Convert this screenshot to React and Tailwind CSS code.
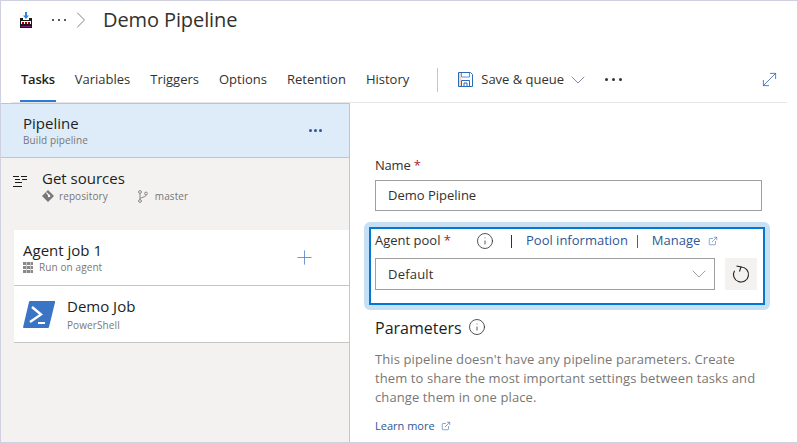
import React from 'react';
import { ChevronDown, ChevronRight, Plus, Info, ExternalLink, MoveDiagonal } from 'lucide-react';

const font = { fontFamily: '"Open Sans", "Noto Sans", sans-serif' };

const BuildIcon = () => (
  <svg width="14" height="16" viewBox="0 0 14 16">
    <path d="M7 0v5" stroke="#2b88d8" strokeWidth="2" />
    <path d="M4 3.5L7 7l3-3.5z" fill="#2b88d8" />
    <path d="M1 6h3v2h6V6h3v10H1z" fill="#1b1a19" />
    <rect x="2" y="9" width="10" height="3" fill="#fff" />
    <rect x="3" y="10" width="2" height="2" fill="#a80000" />
    <rect x="6" y="10" width="2" height="2" fill="#a80000" />
    <rect x="9" y="10" width="2" height="2" fill="#a80000" />
    <rect x="2" y="14" width="10" height="1" fill="#7a1f7a" />
  </svg>
);

const SaveIcon = () => (
  <svg width="15" height="15" viewBox="0 0 15 15" fill="none">
    <path d="M.5.5h12l2 2v12H.5z" stroke="#2b6cb8" />
    <path d="M3.5 1v4h8V1" stroke="#6c8fc0" />
    <path d="M3.5 14V8.5h8V14M6 14v-3h3v3" stroke="#2b6cb8" />
    <rect x="1" y="1" width="2" height="13" fill="#f2c6a0" opacity="0.7" />
  </svg>
);

const RefreshIcon = () => (
  <svg width="20" height="20" viewBox="0 0 20 20" fill="none" stroke="#201f1e" strokeWidth="1.1">
    <path d="M10 3a7.5 7.5 0 1 1-6.5 3.75" />
    <path d="M5.5 2l4.5 1-1.5 4.5" />
  </svg>
);

const SourcesIcon = () => (
  <svg width="15" height="14" viewBox="0 0 15 14" fill="#1b1a19">
    <rect x="0" y="1" width="6" height="1" />
    <rect x="8" y="1" width="6" height="1" />
    <rect x="2" y="4" width="5" height="1" />
    <rect x="9" y="4" width="5" height="1" />
    <rect x="2" y="7" width="7" height="1" />
    <rect x="0" y="11" width="9" height="1" />
  </svg>
);

const GitIcon = () => (
  <svg width="12" height="12" viewBox="0 0 11 11">
    <path d="M5.5 0L11 5.5 5.5 11 0 5.5z" fill="#797775" />
    <circle cx="6.5" cy="5.5" r="1.2" fill="#fff" />
    <path d="M4 2.5l3 3" stroke="#fff" />
  </svg>
);

const BranchIcon = () => (
  <svg width="10" height="13" viewBox="0 0 10 13" fill="none" stroke="#8a8886">
    <circle cx="2" cy="2" r="1.4" />
    <circle cx="2" cy="11" r="1.4" />
    <circle cx="8" cy="3.5" r="1.4" />
    <path d="M2 3.5v6M8 5c0 2.5-6 2-6 4" />
  </svg>
);

const AgentIcon = () => (
  <svg width="10" height="11" viewBox="0 0 10 11" fill="#8a8886">
    <rect x="0" y="0" width="10" height="3" />
    <rect x="0" y="4" width="10" height="3" />
    <rect x="0" y="8" width="10" height="3" />
    <rect x="3" y="0" width="1" height="11" fill="#c8c6c4" />
    <rect x="7" y="0" width="1" height="11" fill="#c8c6c4" />
  </svg>
);

const PowerShellIcon = () => (
  <svg width="32" height="27" viewBox="0 0 32 27">
    <path d="M7 0h24.5c.5 0 .7.4.6 1L26 26c-.1.6-.5 1-1 1H.8c-.6 0-.9-.4-.7-1L6 1c.1-.6.5-1 1-1z" fill="#3a74c5" />
    <path d="M9 6l9 7.5L7 21" fill="none" stroke="#fff" strokeWidth="2.4" />
    <path d="M15 22h7" stroke="#fff" strokeWidth="2" />
  </svg>
);

const Tab = ({ label, active }) => (
  <div className={`relative h-full flex items-center ${active ? 'font-semibold text-[#201f1e] tracking-[-0.25px]' : 'text-[#323130]'}`}>
    <span>{label}</span>
    {active && <span className="absolute left-[-1px] right-[-1px] bottom-0 h-[2px] bg-[#2b7cd3]" />}
  </div>
);

export default function App() {
  return (
    <div style={font} className="w-[798px] h-[443px] flex flex-col overflow-hidden bg-white border border-[#cfd0e0] box-border text-[#323130]">
      {/* Breadcrumb */}
      <div className="h-[38px] flex items-center pl-[18px] shrink-0">
        <BuildIcon />
        <span className="ml-[19px] flex gap-[4px]">
          <i className="w-[2px] h-[2px] bg-[#5c5a58]" />
          <i className="w-[2px] h-[2px] bg-[#5c5a58]" />
          <i className="w-[2px] h-[2px] bg-[#5c5a58]" />
        </span>
        <ChevronRight size={28} strokeWidth={0.8} className="ml-[1px] text-[#797775]" />
        <span className="ml-[8px] text-[20px] tracking-[-0.1px] text-[#323130] leading-none">Demo Pipeline</span>
      </div>

      {/* Tabs */}
      <div className="h-[64px] ml-[10px] mr-[10px] shrink-0 border-b border-[#e6e6e6] flex items-stretch pl-[10px] pr-[7px] pt-[18px] text-[13px]">
        <div className="flex items-center gap-[20px]">
          <Tab label="Tasks" active />
          <Tab label="Variables" />
          <Tab label="Triggers" />
          <Tab label="Options" />
          <Tab label="Retention" />
          <Tab label="History" />
        </div>
        <div className="w-px h-[24px] bg-[#c8c6c4] ml-[28px] self-center" />
        <div className="flex items-center ml-[20px]">
          <SaveIcon />
          <span className="ml-[8px]">Save &amp; queue</span>
          <ChevronDown size={24} strokeWidth={0.8} className="ml-[2px] text-[#5c6f8c]" />
          <span className="ml-[15px] flex gap-[4px]">
            <i className="w-[3px] h-[3px] rounded-full bg-[#323130]" />
            <i className="w-[3px] h-[3px] rounded-full bg-[#323130]" />
            <i className="w-[3px] h-[3px] rounded-full bg-[#323130]" />
          </span>
        </div>
        <div className="ml-auto flex items-center">
          <MoveDiagonal size={21} strokeWidth={0.9} className="text-[#2b5fb3]" />
        </div>
      </div>

      <div className="flex-1 flex min-h-0">
        {/* Left panel */}
        <div className="w-[349px] shrink-0 bg-[#f3f2f1] border-r border-[#c8c6c4] flex flex-col">
          <div className="h-[55px] bg-[#deecf9] border border-l-0 border-[#a9c8f2] flex items-center justify-between pl-[22px] pr-[27px] -mr-px relative">
            <div>
              <div className="text-[15px] leading-[19px] text-[#201f1e]">Pipeline</div>
              <div className="text-[10px] leading-[14px] text-[#797775] tracking-[0.1px]">Build pipeline</div>
            </div>
            <span className="flex gap-[2px]">
              <i className="w-[3px] h-[3px] rounded-full bg-[#2b5797]" />
              <i className="w-[3px] h-[3px] rounded-full bg-[#2b5797]" />
              <i className="w-[3px] h-[3px] rounded-full bg-[#2b5797]" />
            </span>
          </div>

          <div className="h-[72px] flex pl-[12px] pt-[11px]">
            <div className="pt-[6px]"><SourcesIcon /></div>
            <div className="ml-[14px]">
              <div className="text-[15px] leading-[19px] text-[#201f1e]">Get sources</div>
              <div className="flex items-center text-[10px] leading-[14px] text-[#797775] mt-[1px] tracking-[0.1px]">
                <GitIcon />
                <span className="ml-[5px]">repository</span>
                <span className="ml-[30px]"><BranchIcon /></span>
                <span className="ml-[7px]">master</span>
              </div>
            </div>
          </div>

          <div className="ml-[13px] bg-white">
            <div className="h-[56px] border-b border-[#c8c6c4] flex items-center justify-between pl-[9px] pr-[33px]">
              <div>
                <div className="text-[15px] leading-[19px] text-[#201f1e]">Agent job 1</div>
                <div className="flex items-center text-[10px] leading-[14px] text-[#797775] tracking-[0.1px]">
                  <AgentIcon />
                  <span className="ml-[6px]">Run on agent</span>
                </div>
              </div>
              <Plus size={23} strokeWidth={0.9} className="text-[#5b87c7]" />
            </div>
            <div className="h-[57px] border-b border-[#c8c6c4] flex items-center pl-[9px]">
              <PowerShellIcon />
              <div className="ml-[12px]">
                <div className="text-[15px] leading-[19px] text-[#201f1e]">Demo Job</div>
                <div className="text-[10px] leading-[14px] text-[#797775] mt-[2px] tracking-[0.1px]">PowerShell</div>
              </div>
            </div>
          </div>
        </div>

        {/* Right panel */}
        <div className="flex-1 flex flex-col pl-[14px] pt-[53px] min-w-0">
          <div className="pl-[11px] pr-[35px]">
            <div className="text-[13px] leading-[18px] tracking-[-0.2px]">
              Name <span className="text-[#a4262c]">*</span>
            </div>
            <div className="mt-[6px] h-[31px] border border-[#a19f9d] flex items-center pl-[12px] pt-[1px] text-[13px]">
              Demo Pipeline
            </div>
          </div>

          <div className="mt-[11px] w-[406px] rounded-[6px] border-[5px] border-[#c7e0f4]">
            <div className="h-[78px] border-2 border-[#0078d4] px-[4px] pt-[2px]">
              <div className="flex items-center h-[20px] text-[13px]">
                <span>Agent pool <span className="text-[#a4262c]">*</span></span>
                <Info size={18} strokeWidth={1} className="ml-[25px] text-[#201f1e]" />
                <span className="ml-[17px] w-px h-[13px] bg-[#323130]" />
                <span className="ml-[14px] text-[#2b5797]">Pool information</span>
                <span className="ml-[9px] w-px h-[13px] bg-[#1f6fb5]" />
                <span className="ml-[14px] text-[#2b5797]">Manage</span>
                <ExternalLink size={10} strokeWidth={1.3} className="ml-[8px] text-[#2b5fb3]" />
              </div>
              <div className="flex mt-[7px] gap-[10px]">
                <div className="w-[340px] h-[32px] border border-[#a19f9d] flex items-center justify-between pl-[12px] pr-[3px] text-[13px] tracking-[0.2px]">
                  <span className="pt-[2px]">Default</span>
                  <ChevronDown size={24} strokeWidth={0.8} className="text-[#8a8886]" />
                </div>
                <div className="w-[32px] h-[32px] bg-[#f3f2f1] flex items-center justify-center">
                  <RefreshIcon />
                </div>
              </div>
            </div>
          </div>

          <div className="pl-[11px] mt-[6px] w-[400px]">
            <div className="flex items-center">
              <span className="text-[16px] leading-[24px] text-[#201f1e]">Parameters</span>
              <Info size={18} strokeWidth={1} className="ml-[6px] -mt-[3px] text-[#201f1e]" />
            </div>
            <p className="mt-[10px] text-[13px] leading-[19px] text-[#797775] tracking-[0.1px]">
              This pipeline doesn't have any pipeline parameters. Create them to share the most important settings between tasks and change them in one place.
            </p>
            <div className="flex items-center mt-[11px] text-[11px] leading-[16px] text-[#2b5797]">
              Learn more
              <ExternalLink size={10} strokeWidth={1.3} className="ml-[6px]" />
            </div>
          </div>
        </div>
      </div>
    </div>
  );
}
